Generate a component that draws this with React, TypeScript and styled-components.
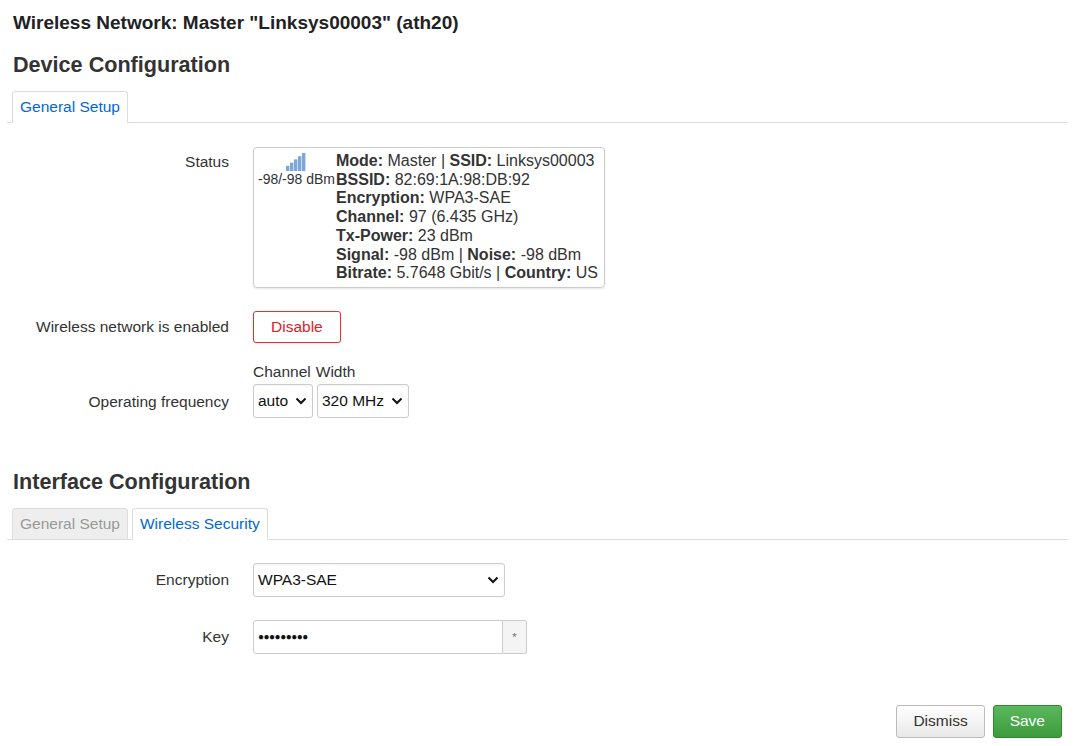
import React from "react";
import styled, { createGlobalStyle } from "styled-components";

const G = createGlobalStyle`
  body { margin: 0; font-family: "Liberation Sans", Arial, sans-serif; color: #333; background: #fff; font-size: 15.5px; }
`;
const Page = styled.div`padding: 12px 7px 0 7px; width: 1061px;`;
const Title = styled.h2`font-size: 19px; font-weight: bold; margin: 0 0 0 6px; color: #222; line-height: 22px;`;
const Section = styled.h3<{ $top: number }>`font-size: 21.6px; font-weight: bold; margin: ${p => p.$top}px 0 0 6px; color: #333; line-height: 26px;`;
const Tabs = styled.div`display: flex; gap: 4px; border-bottom: 1px solid #ddd; margin-top: 13px; padding-left: 5px;`;
const Tab = styled.div<{ $active?: boolean }>`
  padding: 6px 7px 6px; font-size: 15.5px; border: 1px solid #ddd; border-radius: 3px 3px 0 0;
  margin-bottom: -1px; background: ${p => p.$active ? "#fff" : "#eee"}; color: ${p => p.$active ? "#0069d6" : "#999"};
  border-bottom: 1px solid ${p => p.$active ? "#fff" : "#ddd"};
`;
const Row = styled.div<{ $top: number; $align?: string }>`display: flex; align-items: ${p => p.$align || "center"}; margin-top: ${p => p.$top}px;`;
const Label = styled.div<{ $pt?: number; $pb?: number }>`width: 222px; text-align: right; padding-right: 24px; padding-top: ${p => p.$pt || 0}px; padding-bottom: ${p => p.$pb || 0}px;`;
const StatusBox = styled.div`display: flex; border: 1px solid #ccc; border-radius: 4px; padding: 4px 6px 4px 3px; box-shadow: 0 1px 2px rgba(0,0,0,.1); width: 352px; box-sizing: border-box;`;
const Sig = styled.div`display: flex; flex-direction: column; align-items: center; font-size: 14px; width: 86px; padding-top: 1px; white-space: nowrap;`;
const Info = styled.div`font-size: 16px; line-height: 18.7px; white-space: nowrap; b { font-weight: bold; }`;
const BtnOutline = styled.button`font-family: inherit; font-size: 15.5px; color: #d22; background: #fff; border: 1px solid #d33; border-radius: 3px; padding: 6px 17px; box-shadow: 0 1px 2px rgba(0,0,0,.1);`;
const Sel = styled.div<{ $w: number }>`display: flex; align-items: center; justify-content: space-between; width: ${p => p.$w}px; height: 34px; box-sizing: border-box; border: 1px solid #ccc; border-radius: 3px; padding: 0 5px 0 4px; color: #111; box-shadow: inset 0 1px 2px rgba(0,0,0,.05); font-size: 15.5px;`;
const Col = styled.div`display: flex; flex-direction: column;`;
const SmallHead = styled.div`display: flex; gap: 5px; margin-bottom: 3px;`;
const Pair = styled.div<{ $gap?: number }>`display: flex; gap: ${p => p.$gap || 0}px;`;
const KeyIn = styled.div`width: 250px; height: 34px; box-sizing: border-box; border: 1px solid #ccc; border-radius: 3px 0 0 3px; display: flex; align-items: center; padding-left: 4px; color: #111; font-size: 10px; letter-spacing: -0.5px;`;
const KeyBtn = styled.div`width: 24px; height: 34px; box-sizing: border-box; border: 1px solid #ccc; border-left: none; border-radius: 0 3px 3px 0; background: #f4f4f4; display: flex; align-items: center; justify-content: center; font-size: 11px; color: #666;`;
const Footer = styled.div`display: flex; justify-content: flex-end; gap: 8px; margin-top: 51px; padding-right: 6px;`;
const Btn = styled.button<{ $primary?: boolean }>`font-family: inherit; font-size: 15.5px; height: 33px; padding: 0 16px; border-radius: 3px;
  border: 1px solid ${p => p.$primary ? "#2e8a2e" : "#bbb"}; background: ${p => p.$primary ? "linear-gradient(#5cb85c,#3d9a3d)" : "linear-gradient(#fff,#e8e8e8)"};
  color: ${p => p.$primary ? "#fff" : "#333"};`;

const Chevron = () => (
  <svg width="12" height="8" viewBox="0 0 12 8"><path d="M1.5 1.5 L6 6 L10.5 1.5" fill="none" stroke="#111" strokeWidth="2" /></svg>
);
const Bars = () => (
  <svg width="20" height="18" viewBox="0 0 20 18">
    {[0, 1, 2, 3, 4].map(i => <rect key={i} x={i * 4} y={16 - (i + 1) * 3.2} width="3.4" height={(i + 1) * 3.2 + 2} fill="#7aa7dc" />)}
  </svg>
);

export default function App() {
  return (
    <Page>
      <G />
      <Title>Wireless Network: Master "Linksys00003" (ath20)</Title>
      <Section $top={18}>Device Configuration</Section>
      <Tabs><Tab $active>General Setup</Tab></Tabs>
      <Row $top={24} $align="flex-start">
        <Label $pt={6}>Status</Label>
        <StatusBox>
          <Sig><Bars /><span>-98/-98 dBm</span></Sig>
          <Info>
            <div><b>Mode:</b> Master | <b>SSID:</b> Linksys00003</div>
            <div><b>BSSID:</b> 82:69:1A:98:DB:92</div>
            <div><b>Encryption:</b> WPA3-SAE</div>
            <div><b>Channel:</b> 97 (6.435 GHz)</div>
            <div><b>Tx-Power:</b> 23 dBm</div>
            <div><b>Signal:</b> -98 dBm | <b>Noise:</b> -98 dBm</div>
            <div><b>Bitrate:</b> 5.7648 Gbit/s | <b>Country:</b> US</div>
          </Info>
        </StatusBox>
      </Row>
      <Row $top={23}>
        <Label>Wireless network is enabled</Label>
        <BtnOutline>Disable</BtnOutline>
      </Row>
      <Row $top={20} $align="flex-end">
        <Label $pb={7}>Operating frequency</Label>
        <Col>
          <SmallHead><span>Channel</span><span>Width</span></SmallHead>
          <Pair $gap={4}>
            <Sel $w={60}><span>auto</span><Chevron /></Sel>
            <Sel $w={92}><span>320 MHz</span><Chevron /></Sel>
          </Pair>
        </Col>
      </Row>
      <Section $top={51}>Interface Configuration</Section>
      <Tabs><Tab>General Setup</Tab><Tab $active>Wireless Security</Tab></Tabs>
      <Row $top={23}>
        <Label>Encryption</Label>
        <Sel $w={252}><span>WPA3-SAE</span><Chevron /></Sel>
      </Row>
      <Row $top={23}>
        <Label>Key</Label>
        <Pair><KeyIn>●●●●●●●●●</KeyIn><KeyBtn>*</KeyBtn></Pair>
      </Row>
      <Footer><Btn>Dismiss</Btn><Btn $primary>Save</Btn></Footer>
    </Page>
  );
}
